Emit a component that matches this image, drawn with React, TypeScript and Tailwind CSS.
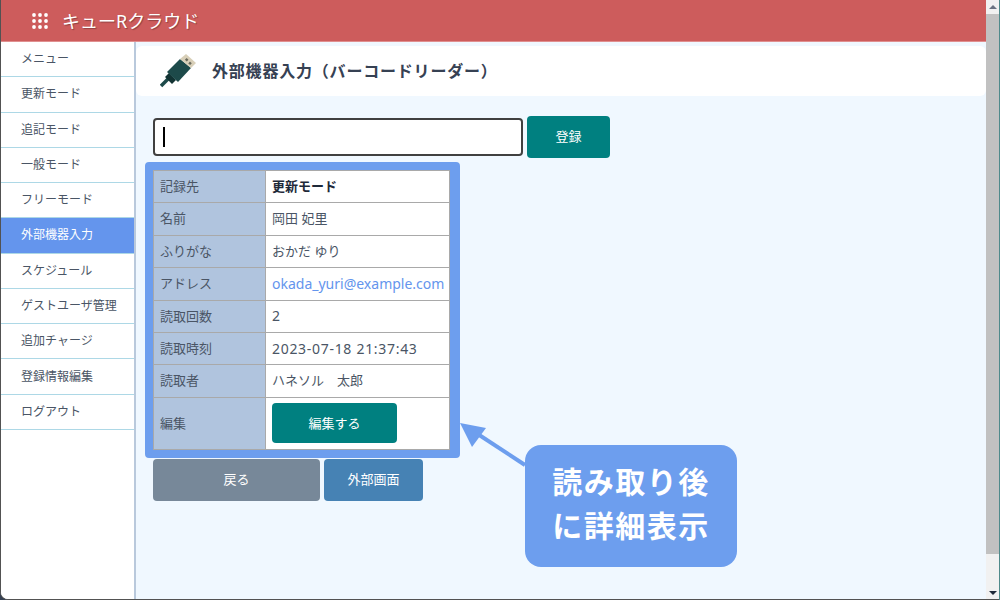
const fontStack = { fontFamily: '"Noto Sans", "Noto Sans CJK JP", sans-serif' };

const menu = ["メニュー", "更新モード", "追記モード", "一般モード", "フリーモード", "外部機器入力", "スケジュール", "ゲストユーザ管理", "追加チャージ", "登録情報編集", "ログアウト"];

const rows: [string, string, string][] = [
  ["記録先", "更新モード", "font-bold text-gray-800"],
  ["名前", "岡田 妃里", "text-gray-600"],
  ["ふりがな", "おかだ ゆり", "text-gray-600"],
  ["アドレス", "okada_yuri@example.com", "text-sm text-[#6495ed]"],
  ["読取回数", "2", "text-sm text-gray-600"],
  ["読取時刻", "2023-07-18 21:37:43", "text-sm tracking-wider text-gray-600"],
  ["読取者", "ハネソル　太郎", "text-gray-600"],
];

function Dots() {
  const p = [2, 8, 14];
  return (
    <svg viewBox="0 0 16 16" className="w-4 h-4 fill-white">
      {p.map((y) => p.map((x) => <circle key={`${x}-${y}`} cx={x} cy={y} r="1.9" />))}
    </svg>
  );
}

function Plug() {
  return (
    <svg viewBox="0 0 36 36" className="w-9 h-9">
      <path d="M1 33 L8 26" stroke="#1d4a4a" strokeWidth="3.5" />
      <path d="M5 24 L9 20 L16 27 L12 31 Z" fill="#123333" />
      <path d="M7 19 L20 6 L31 15 L18 29 Z" fill="#1d4a4a" />
      <path d="M20 6 L26 1 L36 10 L31 15 Z" fill="#d8cfb8" />
      <rect x="25.5" y="5.5" width="2.5" height="2.5" fill="#6b6b5e" transform="rotate(42 26.7 6.7)" />
      <rect x="29" y="9" width="2.5" height="2.5" fill="#6b6b5e" transform="rotate(42 30 10)" />
    </svg>
  );
}

export default function App() {
  return (
    <div className="h-screen w-full overflow-hidden bg-gray-700 border-r border-[#4f8a8b]" style={fontStack}>
      <div className="relative h-full flex border-l border-b border-neutral-600 rounded-bl-lg overflow-hidden bg-white">
        <div className="flex-1 flex flex-col min-w-0">
          <header className="h-[42px] shrink-0 flex items-center gap-3.5 pl-[31px] bg-[#cd5c5c] border-b border-[#e08f8f]">
            <Dots />
            <span className="text-lg text-white [text-shadow:1px_1px_1px_rgba(0,0,0,0.3)]">キューRクラウド</span>
          </header>
          <div className="flex-1 flex min-h-0">
            <nav className="w-[135px] shrink-0 bg-white border-r-2 border-[#b9c9dc]">
              <ul className="h-[388px] grid grid-rows-11">
                {menu.map((m, i) => (
                  <li
                    key={m}
                    className={`flex items-center pl-5 text-xs border-b border-[#add8e6] ${i === 5 ? "bg-[#6495ed] text-white" : "text-gray-600"}`}
                  >
                    {m}
                  </li>
                ))}
              </ul>
            </nav>
            <main className="flex-1 bg-[#f0f8ff] pt-1">
              <div className="h-[50px] bg-white rounded-md flex items-center gap-4 pl-6">
                <Plug />
                <h1 className="text-base font-bold tracking-wider text-gray-700">外部機器入力（バーコードリーダー）</h1>
              </div>
              <div className="pl-[17px] pt-5">
                <div className="flex items-center gap-1 mb-1">
                  <div className="w-[370px] h-[38px] bg-white border-2 border-neutral-700 rounded-sm flex items-center pl-2">
                    <div className="w-0.5 h-5 bg-black" />
                  </div>
                  <button className="w-[83px] h-[42px] bg-[#008080] text-white text-[13px] rounded-sm">登録</button>
                </div>
                <div className="-ml-2 w-fit bg-[#6d9eee] border-8 border-r-[10px] border-[#6d9eee] rounded-sm">
                  <table className="w-[297px] h-[280px] border-collapse bg-white text-[13px] table-fixed">
                    <tbody>
                      {rows.map(([k, v, c]) => (
                        <tr key={k} className="h-[32.4px]">
                          <th className="w-[112px] pl-1.5 text-left font-normal text-gray-600 bg-[#b0c4de] border border-[#a9a9a9]">{k}</th>
                          <td className={`pl-1.5 whitespace-nowrap border border-[#a9a9a9] ${c}`}>{v}</td>
                        </tr>
                      ))}
                      <tr>
                        <th className="pl-1.5 text-left font-normal text-gray-600 bg-[#b0c4de] border border-[#a9a9a9]">編集</th>
                        <td className="pl-1.5 border border-[#a9a9a9]">
                          <button className="w-[125px] h-10 bg-[#008080] text-white rounded-sm">編集する</button>
                        </td>
                      </tr>
                    </tbody>
                  </table>
                </div>
                <div className="flex gap-1 mt-px text-[13px] text-white">
                  <button className="w-[167px] h-[42px] bg-[#778899] rounded-sm">戻る</button>
                  <button className="w-[99px] h-[42px] bg-[#4682b4] rounded-sm">外部画面</button>
                </div>
              </div>
            </main>
          </div>
        </div>
        <aside className="w-[13px] shrink-0 flex flex-col bg-[#f1f1f1]">
          <div className="h-3.5 flex items-center justify-center">
            <div className="border-x-4 border-b-4 border-x-transparent border-b-gray-500" />
          </div>
          <div className="h-[540px] bg-[#c1c1c1]" />
          <div className="flex-1 flex items-end justify-center pb-1">
            <div className="border-x-4 border-t-4 border-x-transparent border-t-gray-800" />
          </div>
        </aside>
        <svg className="absolute left-[457px] top-[420px] w-[70px] h-[50px]" viewBox="0 0 70 50">
          <path d="M67 45 L12 9" stroke="#6d9eee" strokeWidth="4" fill="none" />
          <path d="M2 3 L28 8 L14 27 Z" fill="#6d9eee" />
        </svg>
        <div className="absolute left-[524px] top-[445px] w-[212px] h-[122px] pb-1 rounded-2xl bg-[#6d9eee] flex items-center justify-center text-center text-white text-3xl font-bold leading-11 tracking-wider">
          <p>読み取り後<br />に詳細表示</p>
        </div>
      </div>
    </div>
  );
}
